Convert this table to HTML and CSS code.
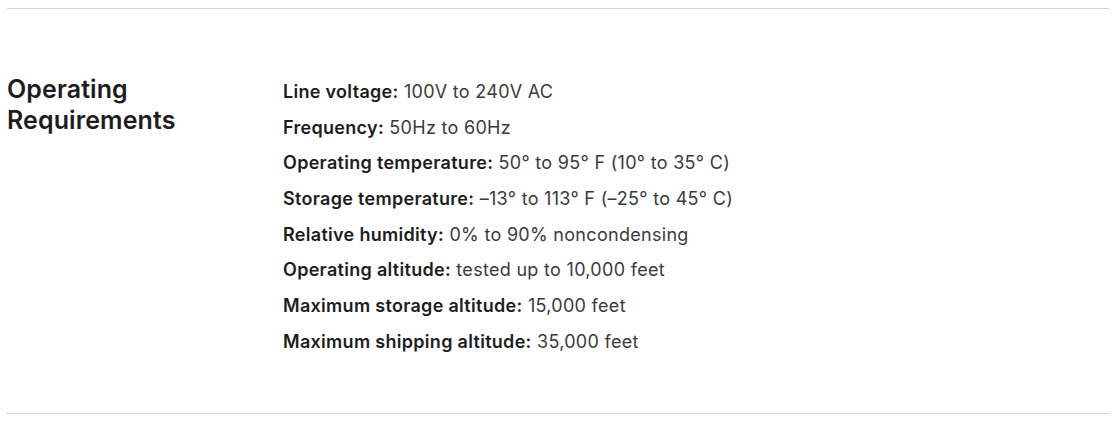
FILE: index.html
```html
<!DOCTYPE html>
<html lang="en">
<head>
<meta charset="utf-8">
<title>Operating Requirements</title>
<link rel="stylesheet" href="styles.css">
</head>
<body>
<section class="spec">
  <h2 class="spec-title">Operating<br>Requirements</h2>
  <ul class="spec-list">
    <li><strong>Line voltage:</strong> 100V to 240V AC</li>
    <li><strong>Frequency:</strong> 50Hz to 60Hz</li>
    <li><strong>Operating temperature:</strong> 50° to 95° F (10° to 35° C)</li>
    <li><strong>Storage temperature:</strong> –13° to 113° F (–25° to 45° C)</li>
    <li><strong>Relative humidity:</strong> 0% to 90% noncondensing</li>
    <li><strong>Operating altitude:</strong> tested up to 10,000 feet</li>
    <li><strong>Maximum storage altitude:</strong> 15,000 feet</li>
    <li><strong>Maximum shipping altitude:</strong> 35,000 feet</li>
  </ul>
</section>
</body>
</html>
```

FILE: styles.css
```css
html, body {
  margin: 0;
  padding: 0;
  background: #fff;
}
body {
  font-family: Inter, "Noto Sans", sans-serif;
  color: #1d1d1f;
}
.spec {
  margin: 8px 7px 0 7px;
  border-top: 1px solid #d2d2d7;
  border-bottom: 1px solid #d2d2d7;
  display: grid;
  grid-template-columns: 276px 1fr;
  padding: 70px 0 58px 0;
}
.spec-title {
  margin: 0;
  margin-top: -5px;
  font-size: 25px;
  line-height: 31px;
  font-weight: 600;
  letter-spacing: 0.1px;
  color: #1d1d1f;
}
.spec-list {
  list-style: none;
  margin: 0;
  padding: 0;
  display: flex;
  flex-direction: column;
  gap: 9.7px;
}
.spec-list li {
  font-size: 18px;
  line-height: 26px;
  letter-spacing: 0.3px;
  color: #3a3a3d;
  font-weight: 400;
}
.spec-list strong {
  font-weight: 600;
  color: #1d1d1f;
}
```
